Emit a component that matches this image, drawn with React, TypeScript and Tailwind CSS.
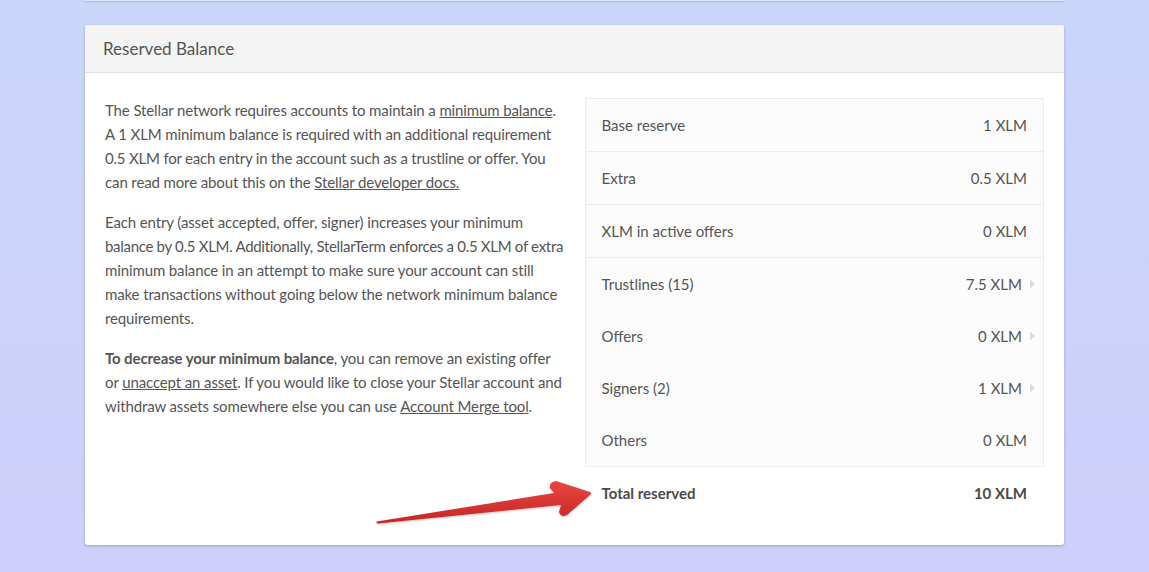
import React from "react";

const rows: { label: string; value: string; chevron?: boolean; border?: boolean }[] = [
  { label: "Base reserve", value: "1 XLM", border: true },
  { label: "Extra", value: "0.5 XLM", border: true },
  { label: "XLM in active offers", value: "0 XLM", border: true },
  { label: "Trustlines (15)", value: "7.5 XLM", chevron: true },
  { label: "Offers", value: "0 XLM", chevron: true },
  { label: "Signers (2)", value: "1 XLM", chevron: true },
  { label: "Others", value: "0 XLM" },
];

function Chevron() {
  return (
    <svg className="absolute right-[8px] top-1/2 -translate-y-1/2" width="5" height="9" viewBox="0 0 5 9">
      <path d="M0 0 L5 4.5 L0 9 Z" fill="#dcdcdc" />
    </svg>
  );
}

export default function App() {
  return (
    <div
      className="relative min-h-[572px] w-full bg-gradient-to-b from-[#c9d6f9] to-[#cfcffb] pb-[27px]"
      style={{ fontFamily: "Lato, 'Noto Sans', sans-serif" }}
    >
      <div className="mx-[85px] h-[1px] bg-[#dde3fa] shadow-[0_1px_2px_rgba(80,90,160,0.35)]" />
      <div className="mx-[85px] mt-[24px] rounded-[3px] bg-white shadow-[0_1px_3px_rgba(40,50,120,0.3)]">
        <div className="flex h-[48px] items-center rounded-t-[3px] border-b border-[#e2e2e2] bg-[#f4f4f4] px-[18px]">
          <h2 className="pt-[1px] text-[17px] text-[#555]">Reserved Balance</h2>
        </div>
        <div className="flex gap-[20px] px-[20px] pt-[25px] pb-[26px]">
          <div className="w-[460px] whitespace-nowrap text-[15px] leading-[24px] tracking-[-0.12px] text-[#555]">
            <p>
              The Stellar network requires accounts to maintain a <a className="underline">minimum balance</a>.
              <br />
              A 1 XLM minimum balance is required with an additional requirement
              <br />
              <span className="tracking-[-0.2px]">0.5 XLM for each entry in the account such as a trustline or offer. You</span>
              <br />
              can read more about this on the <a className="underline">Stellar developer docs.</a>
            </p>
            <p className="mt-[16px]">
              Each entry (asset accepted, offer, signer) increases your minimum
              <br />
              <span className="tracking-[-0.3px]">balance by 0.5 XLM. Additionally, StellarTerm enforces a 0.5 XLM of extra</span>
              <br />
              minimum balance in an attempt to make sure your account can still
              <br />
              make transactions without going below the network minimum balance
              <br />
              requirements.
            </p>
            <p className="mt-[16px]">
              <b className="font-bold">To decrease your minimum balance</b>, you can remove an existing offer
              <br />
              or <a className="underline">unaccept an asset</a>. If you would like to close your Stellar account and
              <br />
              withdraw assets somewhere else you can use <a className="underline">Account Merge tool</a>.
            </p>
          </div>
          <div className="w-[460px]">
            <div className="border border-[#ededed] bg-[#fcfcfc]">
              {rows.map((r) => (
                <div
                  key={r.label}
                  className={`relative flex items-center justify-between pl-[16px] text-[15px] text-[#555] ${
                    r.border ? "h-[53px] border-b border-[#ededed]" : "h-[52px]"
                  } ${r.chevron ? "pr-[21px]" : "pr-[16px]"}`}
                >
                  <span>{r.label}</span>
                  <span>{r.value}</span>
                  {r.chevron && <Chevron />}
                </div>
              ))}
            </div>
            <div className="flex h-[52px] items-center justify-between px-[17px] text-[15px] font-bold text-[#4a4a4a]">
              <span>Total reserved</span>
              <span>10 XLM</span>
            </div>
          </div>
        </div>
      </div>
      <svg className="pointer-events-none absolute left-0 top-0" width="1149" height="572" viewBox="0 0 1149 572">
        <defs>
          <linearGradient id="ar" x1="0" y1="0" x2="0" y2="1">
            <stop offset="0" stopColor="#e8473f" />
            <stop offset="1" stopColor="#c52626" />
          </linearGradient>
          <filter id="sh" x="-10%" y="-50%" width="120%" height="200%">
            <feDropShadow dx="0" dy="1" stdDeviation="1" floodColor="#000" floodOpacity="0.25" />
          </filter>
        </defs>
        <path
          d="M377 521.5 L554 493 L550 488 Q549 482 556 481 L590 492 Q592 493 590 495 L567 515 Q561 518 559 512 L561 505 L378 523.5 Q375 522.5 377 521.5 Z"
          fill="url(#ar)"
          filter="url(#sh)"
        />
      </svg>
    </div>
  );
}
